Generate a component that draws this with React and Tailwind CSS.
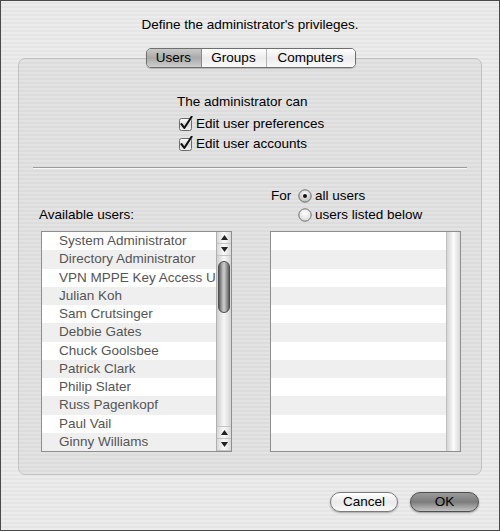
import React from 'react';

const users = [
  'System Administrator',
  'Directory Administrator',
  'VPN MPPE Key Access User',
  'Julian Koh',
  'Sam Crutsinger',
  'Debbie Gates',
  'Chuck Goolsbee',
  'Patrick Clark',
  'Philip Slater',
  'Russ Pagenkopf',
  'Paul Vail',
  'Ginny Williams',
];

const Checkbox = () => (
  <svg width="16" height="16" viewBox="0 0 16 16" className="shrink-0">
    <defs>
      <linearGradient id="cbg" x1="0" y1="0" x2="0" y2="1">
        <stop offset="0" stopColor="#ffffff" />
        <stop offset="0.5" stopColor="#dcdcdc" />
        <stop offset="1" stopColor="#f4f4f4" />
      </linearGradient>
    </defs>
    <rect x="1.5" y="2.5" width="12" height="12" rx="2" fill="url(#cbg)" stroke="#6b6b6b" />
    <path d="M3.5 8.2 L6.3 12 L13.6 0.8" fill="none" stroke="#111" strokeWidth="2.1" strokeLinejoin="round" strokeLinecap="round" />
  </svg>
);

const Radio = ({ on }) => (
  <svg width="14" height="14" viewBox="0 0 14 14" className="shrink-0">
    <defs>
      <radialGradient id={on ? 'rOn' : 'rOff'} cx="0.5" cy="0.35" r="0.7">
        <stop offset="0" stopColor="#ffffff" />
        <stop offset="1" stopColor={on ? '#b4b4b4' : '#d6d6d6'} />
      </radialGradient>
    </defs>
    <circle cx="7" cy="7" r="6.2" fill={on ? 'url(#rOn)' : 'url(#rOff)'} stroke="#6e6e6e" />
    {on && <circle cx="7" cy="7" r="2" fill="#111" />}
  </svg>
);

const Arrow = ({ up }) => (
  <div className="h-[12px] shrink-0 flex items-center justify-center border-b border-[#c4c4c4] bg-[linear-gradient(90deg,#d8d8d8,#fafafa_50%,#d8d8d8)]">
    <svg width="7" height="5" viewBox="0 0 7 5">
      <path d={up ? 'M3.5 0 L7 5 L0 5 Z' : 'M0 0 L7 0 L3.5 5 Z'} fill="#222" />
    </svg>
  </div>
);

const ListRows = ({ items }) => (
  <div className="flex-1 min-w-0 flex flex-col overflow-hidden">
    {items.map((name, i) => (
      <div
        key={i}
        className={`h-[18.3px] pl-[17px] flex items-center whitespace-nowrap overflow-hidden text-[13.5px] text-[#555] ${i % 2 ? 'bg-[#efefef]' : 'bg-white'}`}
      >
        {name}
      </div>
    ))}
  </div>
);

export default function App() {
  return (
    <div className="w-[500px] h-[531px] overflow-hidden border border-[#4a4a4a] flex flex-col font-['Liberation_Sans',Arial,sans-serif] text-black bg-[repeating-linear-gradient(0deg,#ececec_0px,#ececec_2px,#e5e5e5_2px,#e5e5e5_4px)]">
      <div className="pt-[16px] text-center text-[13.5px] leading-[16px]">Define the administrator's privileges.</div>

      <div className="mt-[15px] mb-[-10px] relative z-10 flex justify-center">
        <div className="flex h-[20px] ml-[1px] rounded-[5px] border border-[#6f6f6f] overflow-hidden shadow-[0_1px_1px_rgba(0,0,0,0.2)] text-[13.5px]">
          <div className="w-[55px] flex items-center justify-center bg-[linear-gradient(180deg,#c9c9c9,#a9a9a9_50%,#cfcfcf)] border-r border-[#8a8a8a]">Users</div>
          <div className="w-[65px] flex items-center justify-center bg-[linear-gradient(180deg,#ffffff,#ececec_50%,#fafafa)] border-r border-[#b5b5b5]">Groups</div>
          <div className="w-[88px] flex items-center justify-center bg-[linear-gradient(180deg,#ffffff,#ececec_50%,#fafafa)]">Computers</div>
        </div>
      </div>

      <div className="mx-[17px] h-[417px] rounded-[7px] border border-[#c2c2c2] bg-black/[0.035] flex flex-col">
        <div className="pt-[35px] pl-[158px] text-[13.5px] leading-[16px]">
          <div>The administrator can</div>
          <div className="mt-[4px] h-[20px] flex items-center gap-[2px] pl-[1px]">
            <Checkbox />
            <span>Edit user preferences</span>
          </div>
          <div className="h-[20px] flex items-center gap-[2px] pl-[1px]">
            <Checkbox />
            <span>Edit user accounts</span>
          </div>
        </div>

        <div className="mt-[13px] mx-[14px] border-t border-[#9c9c9c] border-b border-b-white/70" />

        <div className="mt-[19px] flex items-end text-[13.5px] leading-[16px]">
          <div className="ml-[20px] flex flex-col">
            <div className="h-[16px]">Available users:</div>
            <div className="mt-[8px] ml-[2px] w-[191px] h-[221px] border border-[#8e8e8e] flex bg-white">
              <ListRows items={users} />
              <div className="w-[15px] shrink-0 flex flex-col border-l border-[#b0b0b0]">
                <Arrow up />
                <Arrow />
                <div className="flex-1 relative bg-[linear-gradient(90deg,#cfcfcf,#f7f7f7_50%,#d4d4d4)]">
                  <div className="absolute left-[1px] right-[1px] top-[5px] h-[52px] rounded-full border border-[#4e4e4e] bg-[linear-gradient(90deg,#5a5a5a,#a8a8a8_30%,#d0d0d0_50%,#9a9a9a_75%,#5e5e5e)]" />
                </div>
                <div className="border-t border-[#c4c4c4]">
                  <Arrow up />
                </div>
                <Arrow />
              </div>
            </div>
          </div>

          <div className="ml-[38px] flex flex-col">
            <div className="flex items-center h-[16px] pl-[1px]">
              <span className="w-[27px]">For</span>
              <Radio on />
              <span className="ml-[3px]">all users</span>
            </div>
            <div className="mt-[3px] flex items-center h-[16px] pl-[28px]">
              <Radio />
              <span className="ml-[3px]">users listed below</span>
            </div>
            <div className="mt-[8px] w-[191px] h-[221px] border border-[#8e8e8e] flex bg-white">
              <ListRows items={Array(12).fill('')} />
              <div className="w-[14px] shrink-0 border-l border-[#c0c0c0] bg-[linear-gradient(90deg,#d4d4d4,#fbfbfb_50%,#dadada)]" />
            </div>
          </div>
        </div>
      </div>

      <div className="mt-[17px] mr-[20px] flex justify-end gap-[12px] text-[13.5px]">
        <button className="w-[68px] h-[20px] rounded-full border border-[#7a7a7a] bg-[linear-gradient(180deg,#ffffff,#eaeaea_50%,#f8f8f8)] shadow-[0_1px_2px_rgba(0,0,0,0.3)] flex items-center justify-center">Cancel</button>
        <button className="w-[69px] h-[20px] rounded-full border border-[#4f4f4f] bg-[linear-gradient(180deg,#9a9a9a,#7c7c7c_50%,#c2c2c2)] shadow-[0_1px_2px_rgba(0,0,0,0.35)] flex items-center justify-center">OK</button>
      </div>
    </div>
  );
}
